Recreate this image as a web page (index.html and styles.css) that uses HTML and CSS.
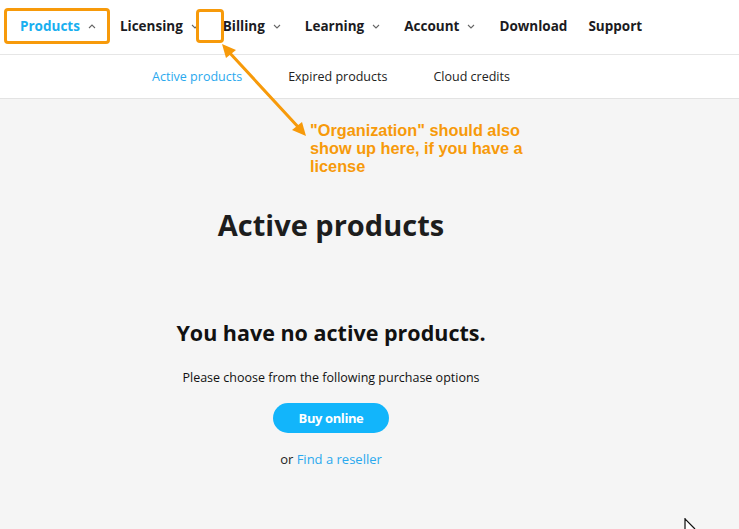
FILE: index.html
```
<!DOCTYPE html>
<html lang="en">
<head>
<meta charset="utf-8">
<title>Active products</title>
<link rel="stylesheet" href="styles.css">
</head>
<body>
<header class="topbar">
  <nav class="mainnav">
    <a class="navitem active">Products <svg class="caret" viewBox="0 0 8 5"><path d="M1 4 L4 1 L7 4"/></svg></a>
    <a class="navitem">Licensing <svg class="caret" viewBox="0 0 8 5"><path d="M1 1 L4 4 L7 1"/></svg></a>
    <a class="navitem">Billing <svg class="caret" viewBox="0 0 8 5"><path d="M1 1 L4 4 L7 1"/></svg></a>
    <a class="navitem">Learning <svg class="caret" viewBox="0 0 8 5"><path d="M1 1 L4 4 L7 1"/></svg></a>
    <a class="navitem">Account <svg class="caret" viewBox="0 0 8 5"><path d="M1 1 L4 4 L7 1"/></svg></a>
    <a class="navitem">Download</a>
    <a class="navitem last">Support</a>
  </nav>
</header>
<div class="subbar">
  <nav class="subnav">
    <a class="subitem current">Active products</a>
    <a class="subitem">Expired products</a>
    <a class="subitem">Cloud credits</a>
  </nav>
</div>
<main class="content">
  <h1 class="title">Active products</h1>
  <h2 class="empty">You have no active products.</h2>
  <p class="choose">Please choose from the following purchase options</p>
  <a class="buy">Buy online</a>
  <p class="reseller">or <a class="link">Find a reseller</a></p>
</main>

<div class="mark mark-products"></div>
<div class="mark mark-slot"></div>
<svg class="arrow" width="739" height="529" viewBox="0 0 739 529">
  <line x1="228" y1="51" x2="300" y2="129" stroke="#f79a0a" stroke-width="3" stroke-linecap="round"/>
  <polygon points="222,44 236,50 226,58" fill="#f79a0a"/>
  <polygon points="306,136 292,130 302,122" fill="#f79a0a"/>
</svg>
<p class="note">"Organization" should also<br>show up here, if you have a<br>license</p>
<svg class="cursor" width="14" height="12" viewBox="0 0 14 12"><path d="M1 0 L1 12 M1 1 L11 11" stroke="#111" stroke-width="1.2" fill="none"/><path d="M2 3 L2 12 L9 11 Z" fill="#fff"/></svg>
</body>
</html>
```
FILE: styles.css
```
* { box-sizing: border-box; }
html, body { margin: 0; padding: 0; }
body {
  width: 739px;
  height: 529px;
  overflow: hidden;
  background: #f5f5f5;
  font-family: "Open Sans", "DejaVu Sans", sans-serif;
  color: #1c1c1c;
  position: relative;
}
a { text-decoration: none; color: inherit; }

.topbar {
  background: #fff;
  height: 55px;
  border-bottom: 1px solid #e6e6e6;
}
.mainnav {
  display: flex;
  align-items: center;
  height: 52px;
  padding-left: 20px;
  gap: 24px;
}
.navitem {
  display: flex;
  align-items: center;
  gap: 8px;
  font-weight: 700;
  font-size: 13.5px;
  color: #1b1b22;
}
.navitem.last { margin-left: -3px; }
.navitem.active { color: #18aff0; }
.caret {
  width: 8px;
  height: 5px;
  fill: none;
  stroke: #666;
  stroke-width: 1.1;
}

.subbar {
  background: #fff;
  height: 44px;
  border-bottom: 1px solid #e3e3e3;
}
.subnav {
  width: 662px;
  height: 43px;
  display: flex;
  justify-content: center;
  align-items: center;
  gap: 46px;
}
.subitem {
  font-size: 12.5px;
  color: #222;
}
.subitem.current { color: #2aa9ee; }

.content {
  width: 662px;
  display: flex;
  flex-direction: column;
  align-items: center;
}
.title {
  margin: 106px 0 0;
  font-size: 29px;
  line-height: 40px;
  font-weight: 700;
  color: #1d1d1d;
}
.empty {
  margin: 73px 0 0;
  font-size: 21.5px;
  line-height: 30px;
  font-weight: 700;
  color: #111;
}
.choose {
  margin: 21px 0 0;
  font-size: 12.5px;
  line-height: 18px;
  color: #111;
}
.buy {
  margin-top: 16px;
  width: 116px;
  height: 30px;
  border-radius: 15px;
  background: #12b5fb;
  color: #fff;
  font-weight: 700;
  font-size: 13px;
  letter-spacing: -0.4px;
  display: flex;
  align-items: center;
  justify-content: center;
}
.reseller {
  margin: 17px 0 0;
  font-size: 13px;
  line-height: 18px;
  color: #222;
}
.link { color: #2aa9ee; }

.mark {
  position: absolute;
  border: 3px solid #f79a0a;
  border-radius: 4px;
}
.mark-products { left: 4px; top: 8px; width: 106px; height: 36px; }
.mark-slot { left: 196px; top: 9px; width: 28px; height: 34px; }
.arrow { position: absolute; left: 0; top: 0; pointer-events: none; }
.note {
  position: absolute;
  left: 310px;
  top: 121px;
  margin: 0;
  font-family: "Liberation Sans", Arial, sans-serif;
  font-weight: 700;
  font-size: 16.3px;
  line-height: 18px;
  color: #f79a0a;
}
.cursor { position: absolute; left: 684px; top: 518px; }
```
